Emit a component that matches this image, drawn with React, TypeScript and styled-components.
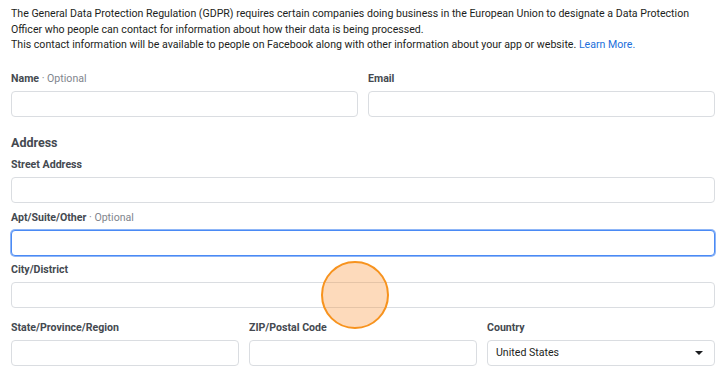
import React from "react";
import styled, { createGlobalStyle } from "styled-components";

const GlobalStyle = createGlobalStyle`
  html, body {
    margin: 0;
    padding: 0;
    background: #fff;
  }
  body {
    font-family: Roboto, "Liberation Sans", Arial, sans-serif;
    color: #1c1e21;
  }
  * {
    box-sizing: border-box;
  }
`;

const Page = styled.div`
  position: relative;
  width: 726px;
  height: 384px;
  padding: 0 11px;
  overflow: hidden;
`;

const Intro = styled.p`
  margin: 6px 0 0;
  font-size: 10.6px;
  line-height: 15.5px;
  color: #1c1e21;
  white-space: nowrap;
  a {
    color: #216fdb;
    text-decoration: none;
  }
`;

const Row = styled.div<{ $cols: number; $top: number }>`
  display: grid;
  grid-template-columns: repeat(${(p) => p.$cols}, 1fr);
  column-gap: 10px;
  margin-top: ${(p) => p.$top}px;
`;

const Field = styled.div`
  display: flex;
  flex-direction: column;
`;

const Label = styled.label`
  font-size: 10.6px;
  line-height: 14px;
  font-weight: 700;
  color: #444950;
  margin-bottom: 5px;
  span {
    font-weight: 400;
    color: #7f858d;
  }
`;

const Input = styled.div<{ $focused?: boolean }>`
  height: 26px;
  border-radius: 4px;
  border: 1px solid ${(p) => (p.$focused ? "#4a8af5" : "#dadde1")};
  box-shadow: ${(p) => (p.$focused ? "0 0 0 1px #8fb6f7" : "none")};
  background: #fff;
  display: flex;
  align-items: center;
  padding: 0 10px 0 8px;
  font-size: 10.6px;
  color: #1c1e21;
`;

const SelectBox = styled(Input)`
  justify-content: space-between;
`;

const Caret = styled.span`
  width: 0;
  height: 0;
  border-left: 4px solid transparent;
  border-right: 4px solid transparent;
  border-top: 4px solid #1c1e21;
  margin-right: 1px;
`;

const Heading = styled.h3`
  margin: 18px 0 0;
  font-size: 12.5px;
  line-height: 16px;
  font-weight: 700;
  color: #444950;
`;

const TouchMark = styled.div`
  position: absolute;
  left: 321px;
  top: 261px;
  width: 68px;
  height: 68px;
  border-radius: 50%;
  border: 2px solid #f7931e;
  background: rgba(248, 150, 60, 0.35);
  pointer-events: none;
`;

const App: React.FC = () => {
  return (
    <>
      <GlobalStyle />
      <Page>
        <Intro>
          The General Data Protection Regulation (GDPR) requires certain companies doing business in the European Union to designate a Data Protection
          <br />
          Officer who people can contact for information about how their data is being processed.
          <br />
          This contact information will be available to people on Facebook along with other information about your app or website.{" "}
          <a href="#">Learn More.</a>
        </Intro>

        <Row $cols={2} $top={19}>
          <Field>
            <Label>
              Name <span>· Optional</span>
            </Label>
            <Input />
          </Field>
          <Field>
            <Label>Email</Label>
            <Input />
          </Field>
        </Row>

        <Heading>Address</Heading>

        <Row $cols={1} $top={7}>
          <Field>
            <Label>Street Address</Label>
            <Input />
          </Field>
        </Row>

        <Row $cols={1} $top={8}>
          <Field>
            <Label>
              Apt/Suite/Other <span>· Optional</span>
            </Label>
            <Input $focused />
          </Field>
        </Row>

        <Row $cols={1} $top={7}>
          <Field>
            <Label>City/District</Label>
            <Input />
          </Field>
        </Row>

        <Row $cols={3} $top={13}>
          <Field>
            <Label>State/Province/Region</Label>
            <Input />
          </Field>
          <Field>
            <Label>ZIP/Postal Code</Label>
            <Input />
          </Field>
          <Field>
            <Label>Country</Label>
            <SelectBox>
              United States
              <Caret />
            </SelectBox>
          </Field>
        </Row>

        <TouchMark />
      </Page>
    </>
  );
};

export default App;
